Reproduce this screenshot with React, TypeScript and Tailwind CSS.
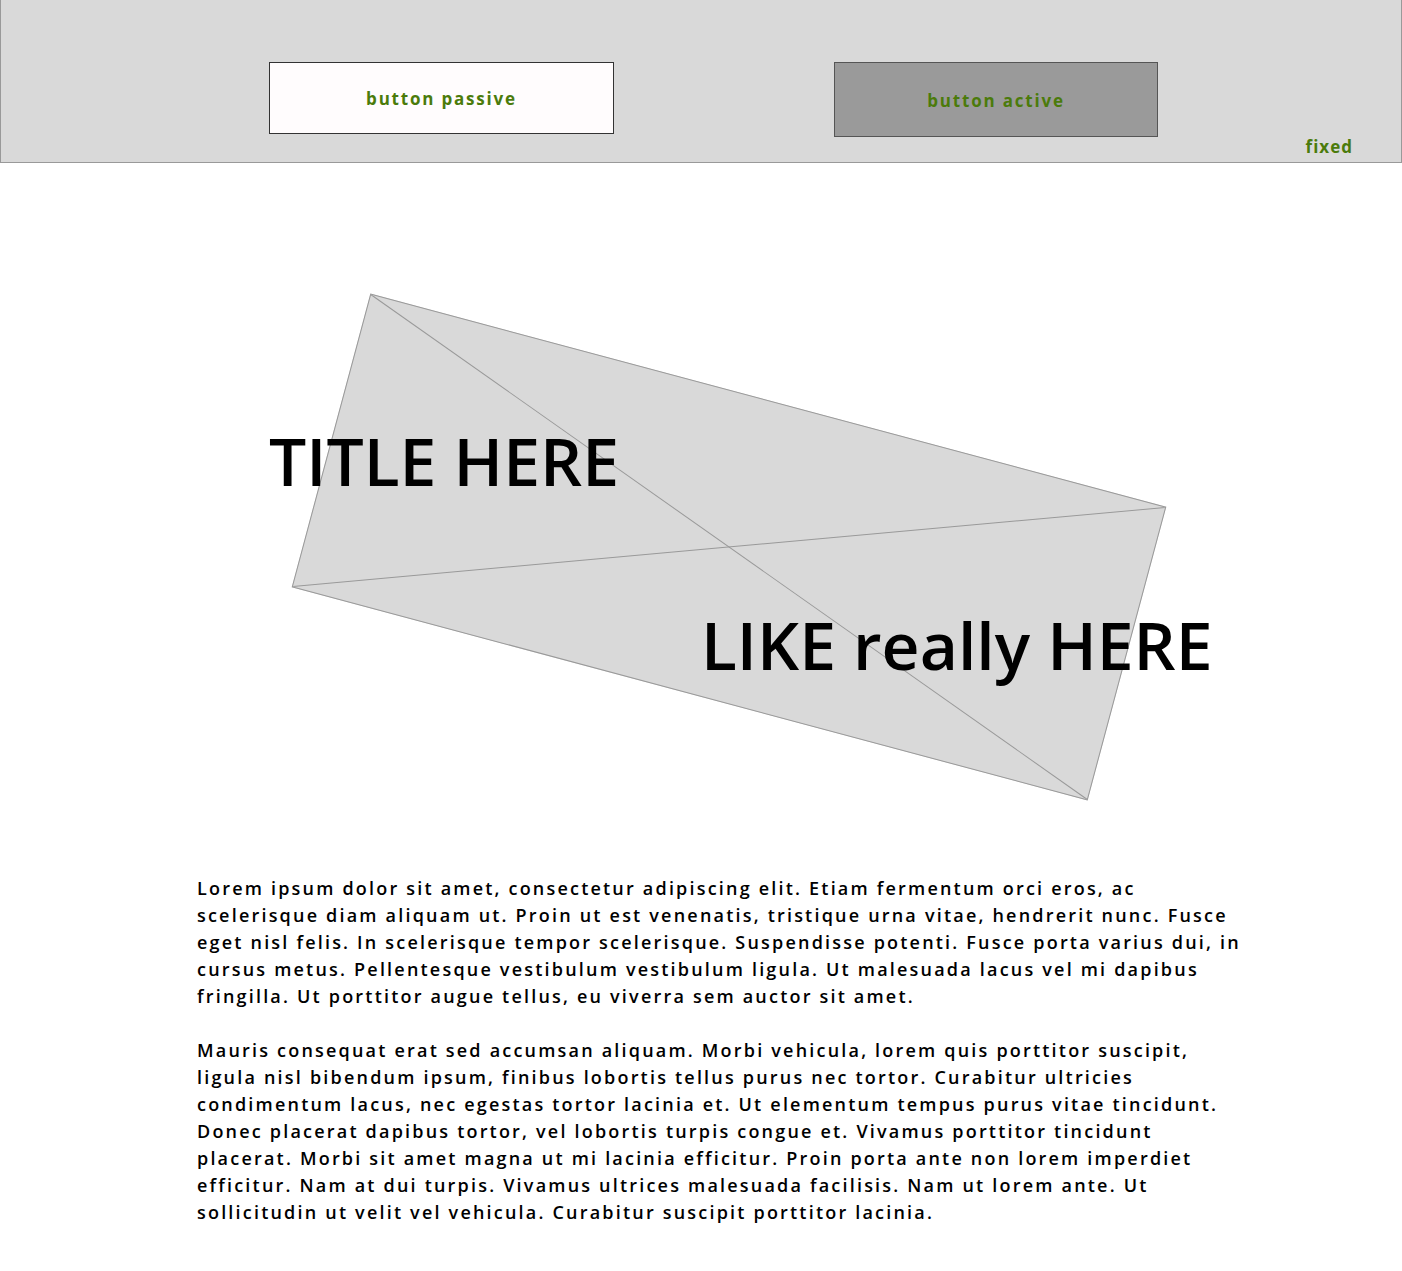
import React from 'react';

const font = { fontFamily: '"Open Sans", "Liberation Sans", sans-serif' };

function Header() {
  return (
    <header className="h-[163px] bg-[#d9d9d9] border border-t-0 border-[#999999] relative">
      <div className="flex items-start pt-[62px]">
        <button className="ml-[268px] w-[345px] h-[72px] bg-[#fffcfd] border border-[#333333] text-[#4b7b0b] text-[17px] font-bold tracking-[1.8px] pt-[2px]">
          button passive
        </button>
        <button className="ml-[220px] w-[324px] h-[75px] bg-[#9a9a9a] border border-[#555555] text-[#4b7b0b] text-[17px] font-bold tracking-[1.8px] pt-[2px]">
          button active
        </button>
      </div>
      <span className="absolute right-[48px] top-[134px] text-[#4b7b0b] text-[17px] font-bold tracking-[1px]">fixed</span>
    </header>
  );
}

function Placeholder() {
  // rotated image placeholder with the crossed lines
  return (
    <div className="absolute left-[317px] top-[232px] w-[824px] h-[304px] rotate-[15deg] bg-[#d9d9d9] border border-[#999999]">
      <svg className="absolute inset-0 w-full h-full" viewBox="0 0 822 302" preserveAspectRatio="none">
        <line x1="0" y1="0" x2="822" y2="302" stroke="#999999" strokeWidth="1" />
        <line x1="822" y1="0" x2="0" y2="302" stroke="#999999" strokeWidth="1" />
      </svg>
    </div>
  );
}

function Hero() {
  return (
    <section className="relative h-[690px]">
      <Placeholder />
      <div className="relative">
        <h1 className="pl-[269px] pt-[255px] text-[66px] leading-[84px] font-semibold text-black">TITLE HERE</h1>
        <h2 className="pl-[701px] pt-[100px] text-[66px] leading-[84px] font-semibold text-black">LIKE really HERE</h2>
      </div>
    </section>
  );
}

export default function App() {
  return (
    <div className="bg-white min-h-screen" style={font}>
      <Header />
      <Hero />
      <main className="pl-[197px] pr-[150px] pt-[22px] pb-[40px] text-[18px] leading-[27px] font-semibold text-black tracking-[2.2px]">
        <p>
          Lorem ipsum dolor sit amet, consectetur adipiscing elit. Etiam fermentum orci eros, ac scelerisque diam aliquam ut. Proin ut est venenatis, tristique urna vitae, hendrerit nunc. Fusce eget nisl felis. In scelerisque tempor scelerisque. Suspendisse potenti. Fusce porta varius dui, in cursus metus. Pellentesque vestibulum vestibulum ligula. Ut malesuada lacus vel mi dapibus fringilla. Ut porttitor augue tellus, eu viverra sem auctor sit amet.
        </p>
        <p className="mt-[27px]">
          Mauris consequat erat sed accumsan aliquam. Morbi vehicula, lorem quis porttitor suscipit, ligula nisl bibendum ipsum, finibus lobortis tellus purus nec tortor. Curabitur ultricies condimentum lacus, nec egestas tortor lacinia et. Ut elementum tempus purus vitae tincidunt. Donec placerat dapibus tortor, vel lobortis turpis congue et. Vivamus porttitor tincidunt placerat. Morbi sit amet magna ut mi lacinia efficitur. Proin porta ante non lorem imperdiet efficitur. Nam at dui turpis. Vivamus ultrices malesuada facilisis. Nam ut lorem ante. Ut sollicitudin ut velit vel vehicula. Curabitur suscipit porttitor lacinia.
        </p>
      </main>
    </div>
  );
}
